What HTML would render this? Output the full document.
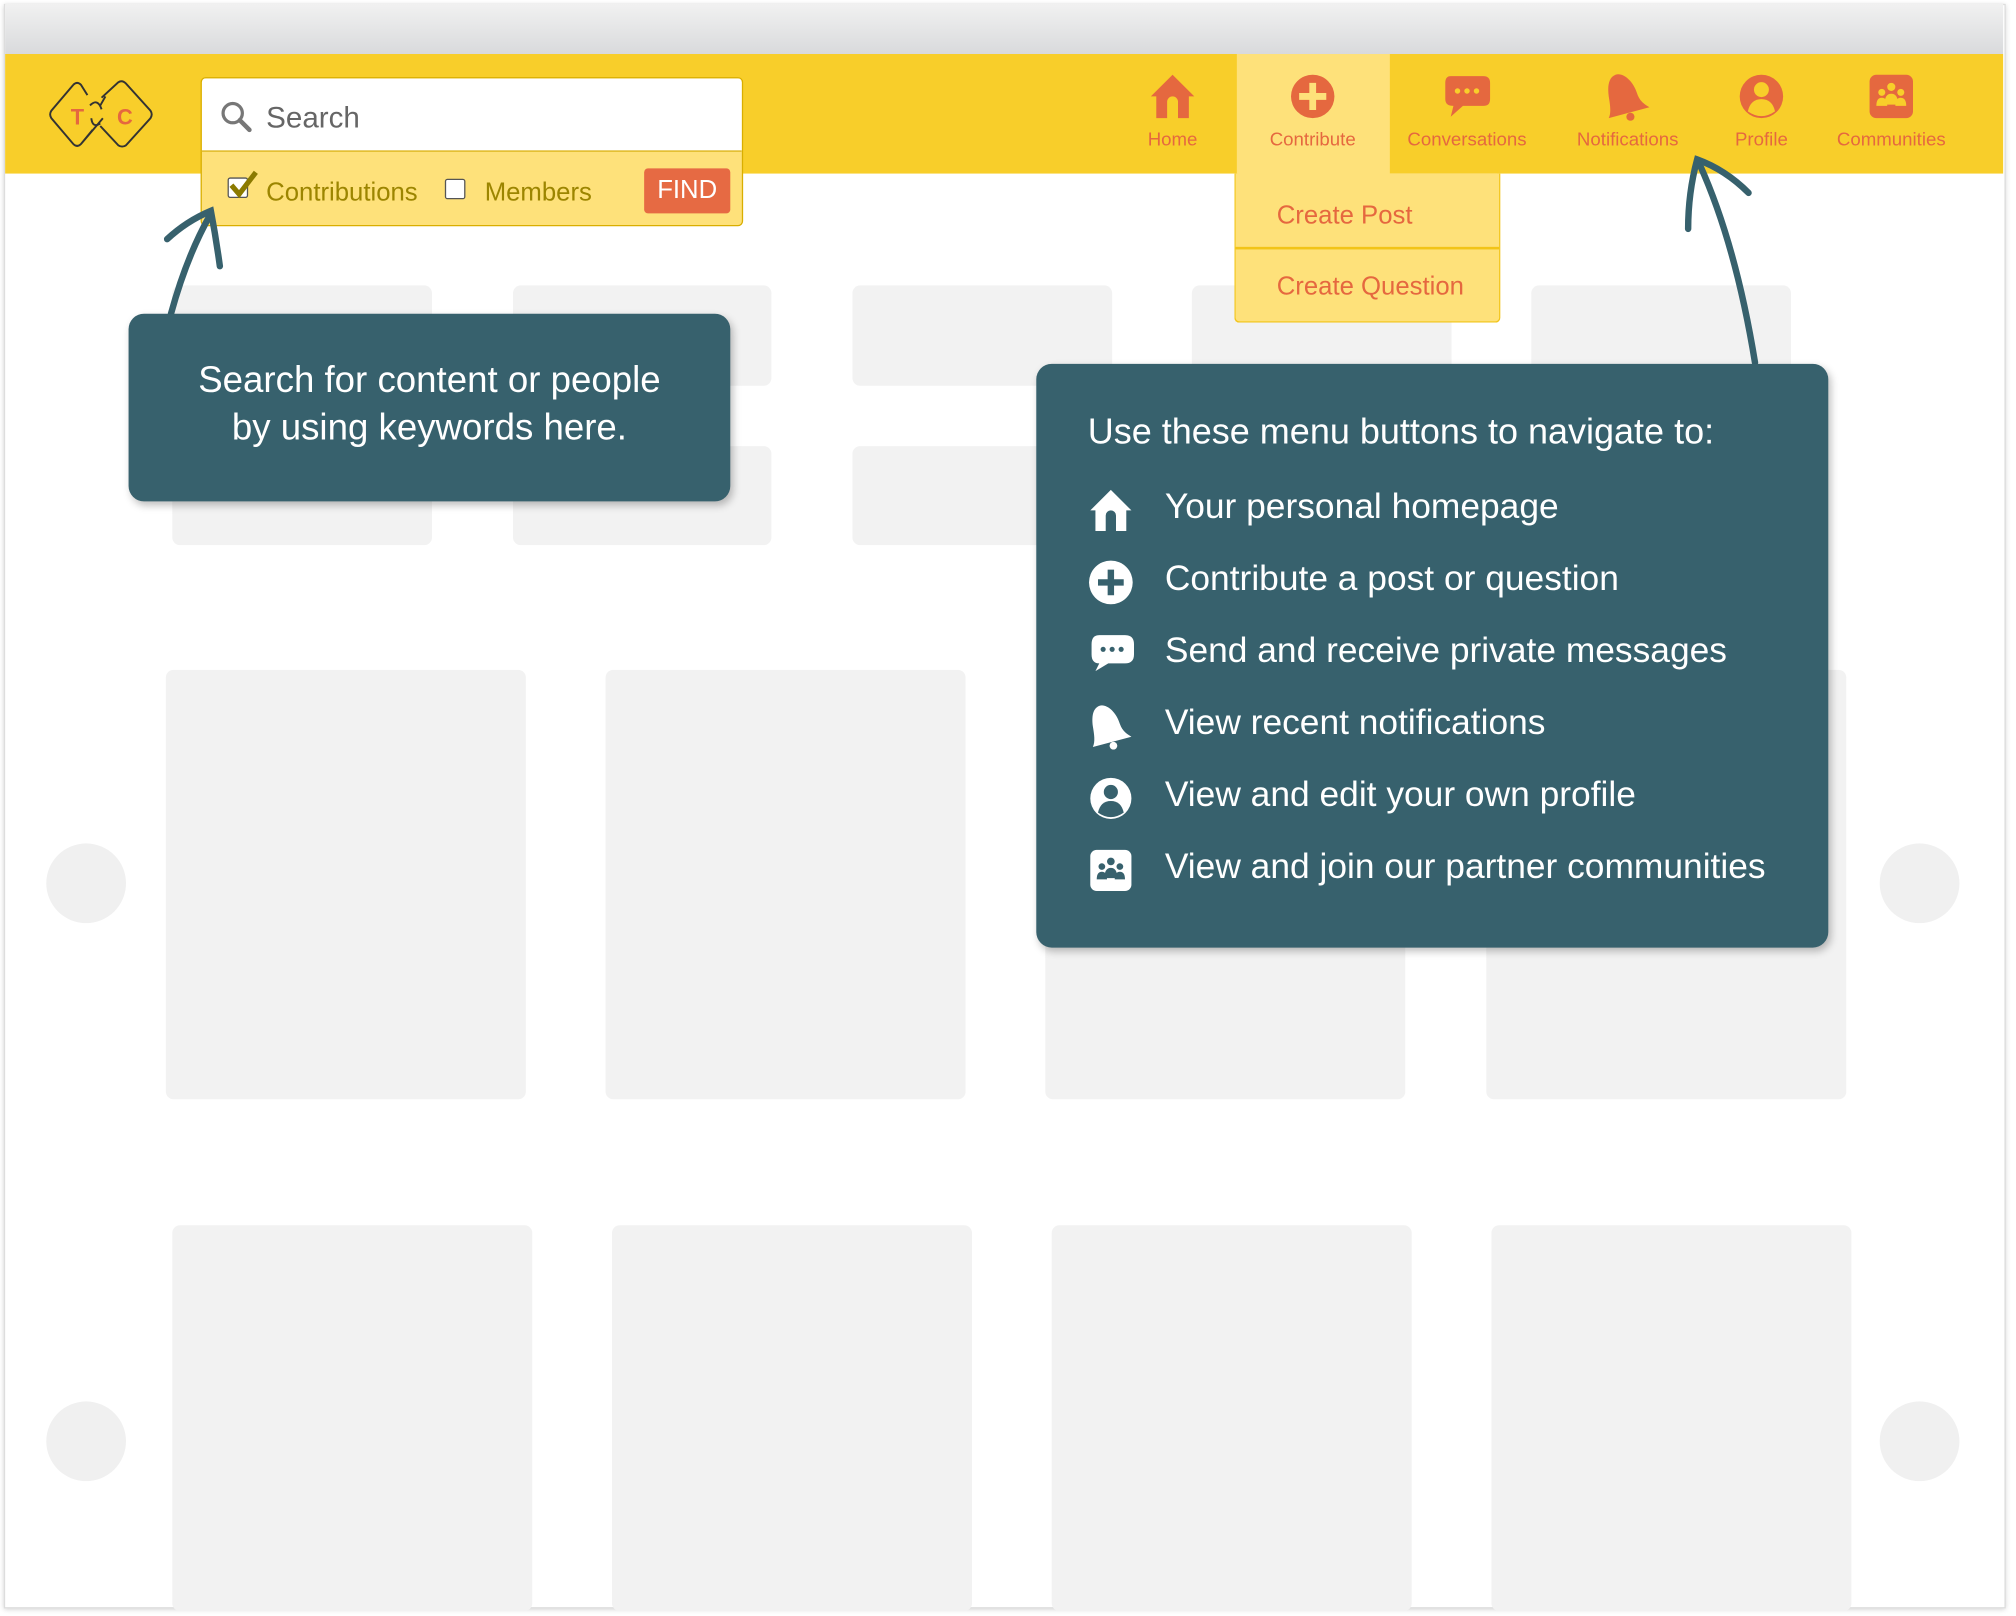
<!DOCTYPE html>
<html><head><meta charset="utf-8">
<style>
html,body{margin:0;padding:0;background:#fff;width:2016px;height:1616px;overflow:hidden}
#s{position:absolute;left:0;top:0;width:1568px;height:1257px;transform:scale(1.285714);transform-origin:0 0;font-family:"Liberation Sans",sans-serif}
.a{position:absolute}
.g{position:absolute;background:#f2f2f2;border-radius:6px}
.c{position:absolute;background:#f0f0f0;border-radius:50%;width:62px;height:62px}
.nav{position:absolute;top:42px;height:93px;text-align:center;color:#e5683f;font-size:14.5px}
.nav svg{position:absolute;left:50%;margin-left:-19px;top:14px}
.nav span{position:absolute;left:0;right:0;top:59px;white-space:nowrap}
.tip{position:absolute;background:#37616d;border-radius:12px;color:#fff;font-family:"Liberation Sans Narrow","Liberation Sans",sans-serif;box-shadow:2px 3px 6px rgba(0,0,0,.25)}
.row{position:absolute;left:40px;height:40px;font-size:27.5px;white-space:nowrap}
.row svg{position:absolute;left:0;top:2px}
.row span{position:absolute;left:60px;top:1px}
</style></head><body>
<svg width="0" height="0" style="position:absolute">
<defs>
<symbol id="home" viewBox="0 0 36 36"><path d="M18 2 L34 18 H30 V34 H22 V22 A4 4 0 0 0 14 22 V34 H6 V18 H2 Z"/></symbol>
<symbol id="bell" viewBox="0 0 36 36"><path d="M9 2 C14 0 22 6 25 16 C27 22 31 24 34 26 L4 34 C6 30 5 24 4 18 C3 10 4 4 9 2Z"/><circle cx="20" cy="33" r="3"/></symbol>
</defs></svg>
<div id="s">
<div class="a" style="left:3px;top:3px;width:1555px;height:1246px;border:1px solid #ddd;box-shadow:0 1px 4px rgba(0,0,0,.2)"></div>
<div class="a" style="left:4px;top:3px;width:1554px;height:39px;background:linear-gradient(#f1f1f1,#d9dadc)"></div>
<div class="a" style="left:4px;top:42px;width:1554px;height:93px;background:#f8ce2a"></div>

<div class="g" style="left:134px;top:222px;width:202px;height:78px"></div>
<div class="g" style="left:399px;top:222px;width:201px;height:78px"></div>
<div class="g" style="left:663px;top:222px;width:202px;height:78px"></div>
<div class="g" style="left:927px;top:222px;width:202px;height:78px"></div>
<div class="g" style="left:1191px;top:222px;width:202px;height:78px"></div>
<div class="g" style="left:134px;top:347px;width:202px;height:77px"></div>
<div class="g" style="left:399px;top:347px;width:201px;height:77px"></div>
<div class="g" style="left:663px;top:347px;width:202px;height:77px"></div>
<div class="g" style="left:129px;top:521px;width:280px;height:334px"></div>
<div class="g" style="left:471px;top:521px;width:280px;height:334px"></div>
<div class="g" style="left:813px;top:521px;width:280px;height:334px"></div>
<div class="g" style="left:1156px;top:521px;width:280px;height:334px"></div>
<div class="g" style="left:134px;top:953px;width:280px;height:300px"></div>
<div class="g" style="left:476px;top:953px;width:280px;height:300px"></div>
<div class="g" style="left:818px;top:953px;width:280px;height:300px"></div>
<div class="g" style="left:1160px;top:953px;width:280px;height:300px"></div>
<div class="c" style="left:36px;top:656px"></div>
<div class="c" style="left:1462px;top:656px"></div>
<div class="c" style="left:36px;top:1090px"></div>
<div class="c" style="left:1462px;top:1090px"></div>

<svg class="a" style="left:38px;top:62px" width="84" height="54" viewBox="0 0 84 54">
<path d="M19 4 L2 24 Q0 27 2 30 L19 50 Q22 53 25 50 L34 39 M41 23 Q38 14 32 20 M42 30 L25 50 M30 12 L25 4 Q22 1 19 4" fill="none" stroke="#333" stroke-width="1.5"/>
<path d="M41 14 L54 2 Q57 0 60 3 L79 24 Q81 27 79 30 L60 51 Q57 53 54 51 L40 36 M33 30 Q34 38 40 34 M40 20 L44 13" fill="none" stroke="#333" stroke-width="1.5"/>
<text x="17" y="35" font-family="Liberation Sans" font-weight="bold" font-size="17" fill="#e5683f">T</text>
<text x="53" y="35" font-family="Liberation Sans" font-weight="bold" font-size="17" fill="#e5683f">C</text>
</svg>

<div class="a" style="left:156px;top:60px;width:420px;height:114px;border:1.5px solid #d9ae00;border-radius:4px;background:#fee17a;overflow:hidden">
 <div class="a" style="left:0;top:0;right:0;height:56px;background:#fff;border-bottom:1.5px solid #d9ae00"></div>
 <svg class="a" style="left:14px;top:17px" width="26" height="26" viewBox="0 0 26 26"><circle cx="10" cy="10" r="7.5" fill="none" stroke="#777" stroke-width="2.5"/><path d="M15.5 15.5 L23 23" stroke="#777" stroke-width="3.5" stroke-linecap="round"/></svg>
 <div class="a" style="left:50px;top:17px;font-size:23px;color:#666">Search</div>
 <div class="a" style="left:20px;top:77px;width:14px;height:14px;border:1.5px solid #555;border-radius:2px;background:#fff"></div>
 <svg class="a" style="left:20px;top:71px" width="26" height="24" viewBox="0 0 26 24"><path d="M3 12 L9 19 L22 2" fill="none" stroke="#8b7a00" stroke-width="4"/></svg>
 <div class="a" style="left:50px;top:78px;font-size:20px;color:#9c8500">Contributions</div>
 <div class="a" style="left:189px;top:78px;width:14px;height:14px;border:1.5px solid #555;border-radius:2px;background:#fff"></div>
 <div class="a" style="left:220px;top:78px;font-size:20px;color:#9c8500">Members</div>
 <div class="a" style="left:344px;top:70px;width:67px;height:35px;background:#e66a43;border-radius:3px;color:#fff;font-size:20px;text-align:center;line-height:35px">FIND</div>
</div>

<div class="nav" style="left:962px;width:119px;background:#fee17a;height:94px"></div>
<div class="nav" style="left:872px;width:80px"><svg width="38" height="38" fill="#e5683f"><use href="#home"/></svg><span>Home</span></div>
<div class="nav" style="left:971px;width:100px"><svg width="38" height="38" viewBox="0 0 36 36"><circle cx="18" cy="18" r="16" fill="#e5683f"/><path d="M15.5 8h5v7.5h7.5v5h-7.5v7.5h-5v-7.5H8v-5h7.5z" fill="#fee17a"/></svg><span>Contribute</span></div>
<div class="nav" style="left:1086px;width:110px"><svg width="38" height="38" viewBox="0 0 36 36"><path d="M6 3h24q5 0 5 5v12q0 5-5 5H15l-9 8 2-8q-6 0-6-5V8q0-5 4-5z" fill="#e5683f"/><circle cx="11" cy="14" r="2" fill="#f8ce2a"/><circle cx="18" cy="14" r="2" fill="#f8ce2a"/><circle cx="25" cy="14" r="2" fill="#f8ce2a"/></svg><span>Conversations</span></div>
<div class="nav" style="left:1216px;width:100px"><svg width="38" height="38" fill="#e5683f"><use href="#bell"/></svg><span>Notifications</span></div>
<div class="nav" style="left:1330px;width:80px"><svg width="38" height="38" viewBox="0 0 36 36"><circle cx="18" cy="18" r="16" fill="#e5683f"/><circle cx="18" cy="13" r="5.5" fill="#f8ce2a"/><path d="M8 29 Q10 20 18 20 Q26 20 28 29 Q18 36 8 29Z" fill="#f8ce2a"/></svg><span>Profile</span></div>
<div class="nav" style="left:1421px;width:100px"><svg width="38" height="38" viewBox="0 0 36 36"><rect x="2" y="2" width="32" height="32" rx="5" fill="#e5683f"/><g fill="#f8ce2a"><circle cx="18" cy="11" r="3"/><circle cx="11" cy="15" r="2.6"/><circle cx="25" cy="15" r="2.6"/><path d="M7 25q0-6 4-6t4 6z"/><path d="M21 25q0-6 4-6t4 6z"/><path d="M13 24q0-8 5-8t5 8z"/></g></svg><span>Communities</span></div>

<div class="a" style="left:960px;top:135px;width:205px;height:115px;background:#fee17a;border:1.5px solid #f2c417;border-top:none;border-radius:0 0 4px 4px">
 <div class="a" style="left:0;right:0;top:57px;height:2px;background:#f2c417"></div>
 <div class="a" style="left:32px;top:22px;font-size:20px;color:#e5683f">Create Post</div>
 <div class="a" style="left:32px;top:77px;font-size:20px;color:#e5683f">Create Question</div>
</div>

<svg class="a" style="left:0;top:0" width="1568" height="400" viewBox="0 0 1568 400" fill="none" stroke="#37616d" stroke-linecap="round">
<path d="M133 244 Q145 200 163 168" stroke-width="5"/>
<path d="M130 186 Q145 172 164 164 Q168 185 171 207" stroke-width="5" fill="none"/>
<path d="M1365 282 Q1350 190 1322 128" stroke-width="5"/>
<path d="M1313 178 Q1313 150 1320 124 Q1342 132 1360 150" stroke-width="5"/>
</svg>

<div class="tip" style="left:100px;top:244px;width:468px;height:146px">
 <div class="a" style="left:0;right:0;top:34px;text-align:center;font-size:28.5px;line-height:37px">Search for content or people<br>by using keywords here.</div>
</div>

<div class="tip" style="left:806px;top:283px;width:616px;height:454px">
 <div class="a" style="left:40px;top:37px;font-size:28px;white-space:nowrap">Use these menu buttons to navigate to:</div>
 <div class="row" style="top:94px"><svg width="36" height="36" fill="#fff"><use href="#home"/></svg><span>Your personal homepage</span></div>
 <div class="row" style="top:150px"><svg width="36" height="36" viewBox="0 0 36 36"><circle cx="18" cy="18" r="17" fill="#fff"/><path d="M15.5 8h5v7.5h7.5v5h-7.5v7.5h-5v-7.5H8v-5h7.5z" fill="#37616d"/></svg><span>Contribute a post or question</span></div>
 <div class="row" style="top:206px"><svg width="38" height="36" viewBox="0 0 36 36"><path d="M8 3h20q7 0 7 7v8q0 7-7 7H15L5 31l3-6q-6 0-6-7v-8q0-7 6-7z" fill="#fff"/><circle cx="11" cy="14" r="2" fill="#37616d"/><circle cx="18" cy="14" r="2" fill="#37616d"/><circle cx="25" cy="14" r="2" fill="#37616d"/></svg><span>Send and receive private messages</span></div>
 <div class="row" style="top:262px"><svg width="36" height="36" fill="#fff"><use href="#bell"/></svg><span>View recent notifications</span></div>
 <div class="row" style="top:318px"><svg width="36" height="36" viewBox="0 0 36 36"><circle cx="18" cy="18" r="16" fill="#fff"/><circle cx="18" cy="13" r="5.5" fill="#37616d"/><path d="M8 29 Q10 20 18 20 Q26 20 28 29 Q18 36 8 29Z" fill="#37616d"/></svg><span>View and edit your own profile</span></div>
 <div class="row" style="top:374px"><svg width="36" height="36" viewBox="0 0 36 36"><rect x="2" y="2" width="32" height="32" rx="5" fill="#fff"/><g fill="#37616d"><circle cx="18" cy="11" r="3"/><circle cx="11" cy="15" r="2.6"/><circle cx="25" cy="15" r="2.6"/><path d="M7 25q0-6 4-6t4 6z"/><path d="M21 25q0-6 4-6t4 6z"/><path d="M13 24q0-8 5-8t5 8z"/></g></svg><span>View and join our partner communities</span></div>
</div>
</div>
</body></html>
